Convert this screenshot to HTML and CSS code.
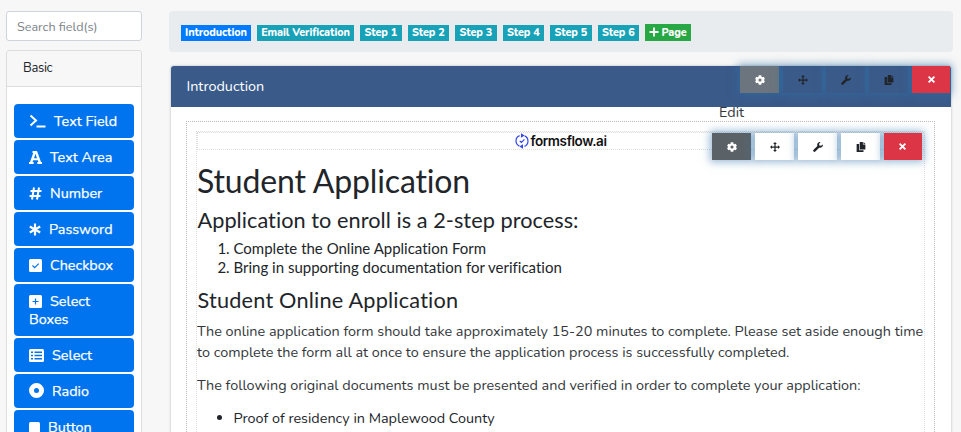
FILE: index.html
```html
<!DOCTYPE html>
<html lang="en">
<head>
<meta charset="utf-8">
<title>Form builder</title>
<link rel="stylesheet" href="styles.css">
</head>
<body>
<svg class="sprite" aria-hidden="true">
  <symbol id="gear" viewBox="0 0 16 16"><path fill-rule="evenodd" d="M6 .5h4l.5 2.300 1.200.7 2.200-.8 2 3.500L14.200 7.500v1l1.700 1.300-2 3.500-2.200-.8-1.200.7-.5 2.300H6l-.5-2.300-1.200-.7-2.200.8-2-3.500L1.800 8.500v-1L.1 6.200l2-3.500 2.200.8 1.200-.7zM8 5.500a2.500 2.500 0 1 0 0 5 2.500 2.500 0 0 0 0-5z"/></symbol>
  <symbol id="move" viewBox="0 0 16 16"><path d="M8 0l3 3.300H9V7h3.700V5L16 8l-3.300 3V9H9v3.700h2L8 16l-3-3.300h2V9H3.300v2L0 8l3.300-3v2H7V3.300H5z"/></symbol>
  <symbol id="wrench" viewBox="0 0 16 16"><path d="M15.800 3.800a4.600 4.600 0 0 1-6.100 5.200l-6 6.100a1.900 1.900 0 0 1-2.800-2.800l6.100-6A4.600 4.600 0 0 1 12.200.2L9.700 2.800l.4 2.700 2.800.5z"/></symbol>
  <symbol id="copy" viewBox="0 0 16 16"><path d="M6 0h5v4h4v8H6zM12 0l3 3h-3zM1 3h4v10h7v3H1z"/></symbol>
  <symbol id="close" viewBox="0 0 16 16"><path d="M4 1.700l4 4 4-4L14.300 4l-4 4 4 4-2.300 2.300-4-4-4 4L1.700 12l4-4-4-4z"/></symbol>
</svg>
<div class="builder">
  <aside class="sidebar">
    <input class="search" type="text" placeholder="Search field(s)" aria-label="Search fields">
    <section class="group">
      <h2 class="group-title">Basic</h2>
      <div class="fields">
        <div class="field"><svg class="fi terminal" viewBox="0 0 17 14"><path class="line" d="M1.500 1.500L7 6.500l-5.500 5M7.500 12.500h9" stroke="currentColor" stroke-width="2"/></svg>Text Field</div>
        <div class="field"><svg class="fi" viewBox="0 0 13 13"><path fill-rule="evenodd" d="M5 0h3l4 11h1v2H8.300v-2h1.100l-.6-1.800H4.200L3.600 11h1.100v2H0v-2h1L4.200 2H3.500V0zM6.500 2.800L5 7.200h3z"/></svg>Text Area</div>
        <div class="field"><svg class="fi" viewBox="0 0 13 13"><path class="line" d="M5 .5L3 12.500M10 .5L8 12.500M1.500 4h11M.5 9h11" stroke="currentColor" stroke-width="2"/></svg>Number</div>
        <div class="field"><svg class="fi star" viewBox="0 0 12 13"><path class="line" d="M6 .5v12M.8 3.500l10.400 6M.8 9.500l10.400-6" stroke="currentColor" stroke-width="2.200"/></svg>Password</div>
        <div class="field"><svg class="fi" viewBox="0 0 13 13"><rect width="13" height="13" rx="1.500"/><path class="line" d="M3.500 6.500l2.200 2.200 4-4" stroke="#0073ef" stroke-width="1.200"/></svg>Checkbox</div>
        <div class="field"><svg class="fi" viewBox="0 0 13 13"><rect width="13" height="13" rx="1.500"/><path d="M6.500 3.500v6M3.500 6.500h6" stroke="#0073ef" stroke-width="1.200"/></svg>Select<br>Boxes</div>
        <div class="field"><svg class="fi wide" viewBox="0 0 15 13"><rect width="15" height="13" rx="1.500"/><path d="M2 3.300h2M5.500 3.300h7.500M2 6.500h2M5.500 6.500h7.500M2 9.700h2M5.500 9.700h7.500" stroke="#0073ef" stroke-width="1.400"/></svg>Select</div>
        <div class="field"><svg class="fi radio" viewBox="0 0 15 15"><path fill-rule="evenodd" d="M7.500 0a7.500 7.500 0 1 0 0 15 7.500 7.500 0 0 0 0-15zm0 5a2.500 2.500 0 1 1 0 5 2.500 2.500 0 0 1 0-5z"/></svg>Radio</div>
        <div class="field"><svg class="fi stop" viewBox="0 0 11 13"><rect y="1" width="11" height="12" rx="1.500"/></svg>Button</div>
      </div>
    </section>
  </aside>
  <main class="main">
    <nav class="pages">
      <span class="badge active">Introduction</span>
      <span class="badge email">Email Verification</span>
      <span class="badge">Step 1</span>
      <span class="badge">Step 2</span>
      <span class="badge">Step 3</span>
      <span class="badge">Step 4</span>
      <span class="badge">Step 5</span>
      <span class="badge">Step 6</span>
      <span class="badge add"><svg viewBox="0 0 10 10"><path d="M5 .5v9M.5 5h9" stroke="#fff" stroke-width="1.800"/></svg>Page</span>
    </nav>
    <section class="panel">
      <header class="panel-head">Introduction
        <div class="tools tools-panel">
          <span class="tool grey"><svg><use href="#gear"/></svg></span>
          <span class="tool"><svg><use href="#move"/></svg></span>
          <span class="tool"><svg><use href="#wrench"/></svg></span>
          <span class="tool"><svg><use href="#copy"/></svg></span>
          <span class="tool red"><svg><use href="#close"/></svg></span>
        </div>
        <span class="tooltip">Edit</span>
      </header>
      <div class="dropzone">
        <div class="content">
          <div class="brand">
            <svg viewBox="0 0 14 16"><path class="line" stroke="#2f45f2" stroke-width="1.200" d="M4.600 2.600A5.700 5.700 0 0 0 4.400 13.100M9.400 13.400A5.700 5.700 0 0 0 9.600 2.900M4.800 8l1.600 1.500 3-3.100"/><path fill="#2f45f2" d="M6 .3l3.600 2.300L6 4.700zM8 11.300l-3.600 2.100L8 15.700z"/></svg>
            <span>formsflow.ai</span>
          </div>
          <h1>Student Application</h1>
          <h3 class="enroll">Application to enroll is a 2-step process:</h3>
          <ol>
            <li>Complete the Online Application Form</li>
            <li>Bring in supporting documentation for verification</li>
          </ol>
          <h3 class="online">Student Online Application</h3>
          <p>The online application form should take approximately 15-20 minutes to complete. Please set aside enough time<br>to complete the form all at once to ensure the application process is successfully completed.</p>
          <p>The following original documents must be presented and verified in order to complete your application:</p>
          <ul><li>Proof of residency in Maplewood County</li></ul>
          <div class="tools tools-content">
            <span class="tool dark"><svg><use href="#gear"/></svg></span>
            <span class="tool"><svg><use href="#move"/></svg></span>
            <span class="tool"><svg><use href="#wrench"/></svg></span>
            <span class="tool"><svg><use href="#copy"/></svg></span>
            <span class="tool red"><svg><use href="#close"/></svg></span>
          </div>
        </div>
      </div>
    </section>
  </main>
</div>
</body>
</html>
```
FILE: styles.css
```css
* { box-sizing: border-box; }
body { margin: 0; height: 432px; overflow: hidden; background: #f7f7f7; color: #212529; font-family: Nunito, Lato, sans-serif; font-size: 14.400px; font-variant-ligatures: none; }
h1, h2, h3, p, ol, ul { margin: 0; padding: 0; font-weight: 400; }
svg { fill: currentColor; }
.line { fill: none; }
.sprite { display: none; }
.builder { display: flex; gap: 27px; padding: 11px 8px 0 6px; height: 432px; overflow: hidden; }
.sidebar { width: 136px; flex: none; }
.search { display: block; width: 136px; height: 30px; padding: 1px 10px 1px; border: 1px solid #ced4da; border-radius: 3px; background: #fff; font: 12.600px Nunito, Lato, sans-serif; }
.search::placeholder { color: #7b838a; opacity: 1; }
.group { margin-top: 9px; height: 382px; border: 1px solid #dcdcdc; border-bottom: 0; border-radius: 4px 4px 0 0; background: #fff; overflow: hidden; }
.group-title { height: 36px; padding-left: 16px; border-bottom: 1px solid #dcdcdc; background: #f7f7f7; font-size: 13px; line-height: 34px; letter-spacing: -.35px; }
.fields { display: flex; flex-direction: column; gap: 2.300px; padding: 17.400px 7px 0; }
.field { flex: none; padding: 7.850px 0 7.850px 15px; border-radius: 4px; background: #0073ef; color: #fff; line-height: 18px; -webkit-text-stroke: .25px #fff; }
.fi { width: 13px; height: 13px; margin-right: 8px; vertical-align: -1.500px; }
.terminal { width: 17px; height: 14px; }
.star { width: 12px; }
.wide { width: 15px; }
.radio { width: 15px; height: 15px; vertical-align: -2px; }
.stop { width: 11px; }
.main { width: 784px; flex: none; }
.pages { display: flex; align-items: flex-end; gap: 6px; height: 41px; padding: 0 12px 11px; border-radius: 4px; background: #e9ecef; }
.badge { width: 41.500px; height: 16px; background: #17a2b8; color: #fff; font-size: 10.800px; font-weight: 800; line-height: 15.500px; text-align: center; letter-spacing: -.1px; white-space: nowrap; }
.active { width: 70px; background: #007bff; }
.email { width: 97px; }
.add { width: 46px; height: 17px; background: #28a745; line-height: 17px; }
.add svg { width: 10px; height: 10px; margin-right: 2px; vertical-align: -1px; }
.panel { width: 780px; height: 366px; margin: 14px 0 0 2px; background: #fff; box-shadow: 0 0 2px 1px #d5d8db; border-radius: 3px 3px 0 0; }
.panel-head { position: relative; height: 41px; padding-left: 15.500px; background: #3a5a8a; color: #fff; line-height: 41px; border-radius: 3px 3px 0 0; }
.tooltip { position: absolute; left: 548px; top: 36px; color: #34383c; line-height: 20px; }
.tools { position: absolute; display: flex; gap: 3.700px; }
.tools-panel { right: 1px; top: 0; }
.tools-content { left: 515px; top: 1px; }
.tool { width: 39.300px; height: 27px; display: flex; align-items: center; justify-content: center; color: #212529; box-shadow: 0 0 8px 2px rgba(48, 113, 169, .5); }
.tools-content .tool { background: #fff; }
.tools-panel .tool { background: #3a5a8a; }
.tool svg { width: 10px; height: 10px; }
.tools .tool:last-child svg { width: 9px; height: 9px; }
.tools .grey { background: #6c757d; color: #fff; }
.tools .dark { background: #5a6268; color: #fff; }
.tools .red { width: 38px; background: #dc3545; color: #fff; }
.dropzone { width: 749px; height: 311px; margin: 14px 0 0 15px; padding: 9px 9px 0; border: 1px dotted #bbb; border-bottom: 0; }
.content { position: relative; width: 729px; height: 301px; border: 1px dotted #ddd; border-bottom: 0; }
.brand { display: flex; align-items: center; justify-content: center; gap: 1px; height: 18px; border: 1px dotted #ddd; border-right: 0; color: #111; font: 600 13.500px/16px Inter, sans-serif; }
.brand svg { width: 14px; height: 16px; }
.brand span { letter-spacing: -.4px; }
h1, h3, ol { font-family: Lato, sans-serif; }
h1 { margin-top: 12px; font-size: 32px; line-height: 38px; letter-spacing: -.15px; }
h3 { font-size: 21.700px; line-height: 27px; padding-left: .5px; }
.enroll { margin-top: 7px; letter-spacing: .05px; }
ol { padding-left: 36.500px; margin-top: 5px; font-size: 15px; line-height: 19px; }
.online { margin-top: 10px; letter-spacing: .2px; }
p { color: #33373b; line-height: 21px; margin-top: 6.500px; white-space: nowrap; }
p + p { margin-top: 12px; }
ul { padding-left: 36.500px; margin-top: 12px; line-height: 21px; }
```
